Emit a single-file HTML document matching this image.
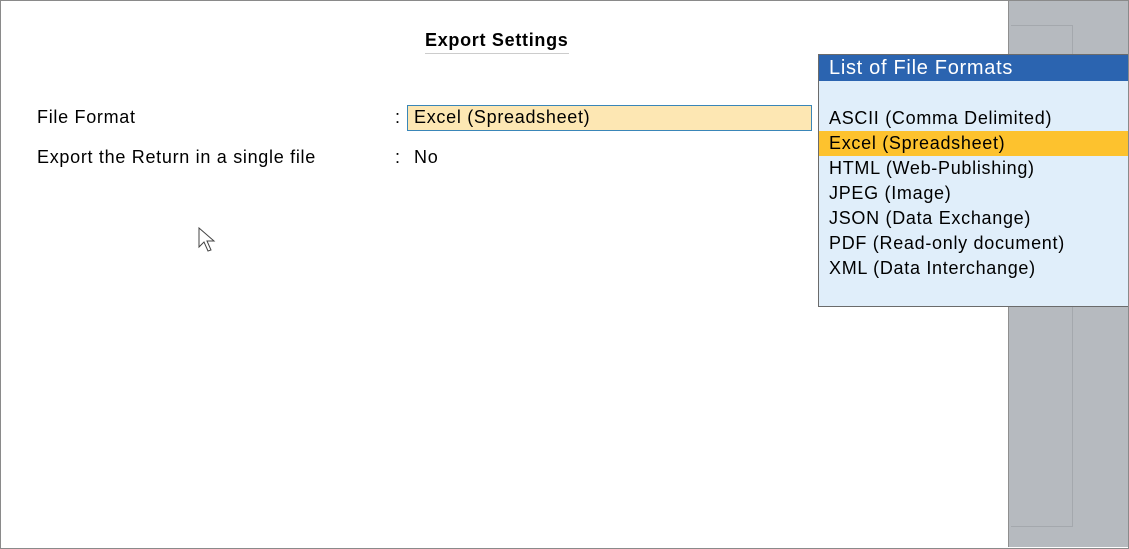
<!DOCTYPE html>
<html><head><style>
body{margin:0;width:1129px;height:549px;overflow:hidden;background:#fff;font-family:"Liberation Sans",Arial,sans-serif;position:relative;letter-spacing:0.7px}
.frame{position:absolute;left:0;top:0;width:1127px;height:547px;border:1px solid #8a8a8a}
.gray{position:absolute;left:1008px;top:1px;width:119px;height:546px;background:#b6babf;border-left:1px solid #8f8f8f}
.inner{position:absolute;left:2px;top:24px;width:61px;height:500px;border-right:1px solid #a4a8ad;border-top:1px solid #a4a8ad;border-bottom:1px solid #a4a8ad}
.t{position:absolute;font-size:18px;color:#000;white-space:nowrap}
.popup{position:absolute;left:818px;top:54px;width:309px;height:251px;background:#e0eefa;border:1px solid #6b6b6b;border-right:none}
.hdr{height:26px;background:#2b64b0;color:#fff;font-size:20px;line-height:26px;padding-left:10px}
.it{height:25px;line-height:25px;font-size:18px;padding-left:10px}
.sel{background:#fdc22e}
</style></head><body>
<div class="frame"></div>
<div class="gray"><div class="inner"></div></div>
<div class="t" style="left:425px;top:30px;font-weight:bold;border-bottom:1px solid #ccc;padding-bottom:2px">Export Settings</div>
<div class="t" style="left:37px;top:107px">File Format</div>
<div class="t" style="left:395px;top:107px">:</div>
<div style="position:absolute;left:407px;top:105px;width:403px;height:24px;background:#fde7b3;border:1px solid #3a86b8"></div>
<div class="t" style="left:414px;top:107px">Excel (Spreadsheet)</div>
<div class="t" style="left:37px;top:147px">Export the Return in a single file</div>
<div class="t" style="left:395px;top:147px">:</div>
<div class="t" style="left:414px;top:147px">No</div>
<svg style="position:absolute;left:198px;top:227px" width="20" height="28"><path d="M1 1 L1 20 L6 15 L10 24 L13 23 L9 14 L16 14 Z" fill="#fff" stroke="#444" stroke-width="1"/></svg>
<div class="popup">
<div class="hdr">List of File Formats</div>
<div style="height:25px"></div>
<div class="it">ASCII (Comma Delimited)</div>
<div class="it sel">Excel (Spreadsheet)</div>
<div class="it">HTML (Web-Publishing)</div>
<div class="it">JPEG (Image)</div>
<div class="it">JSON (Data Exchange)</div>
<div class="it">PDF (Read-only document)</div>
<div class="it">XML (Data Interchange)</div>
</div>
</body></html>
